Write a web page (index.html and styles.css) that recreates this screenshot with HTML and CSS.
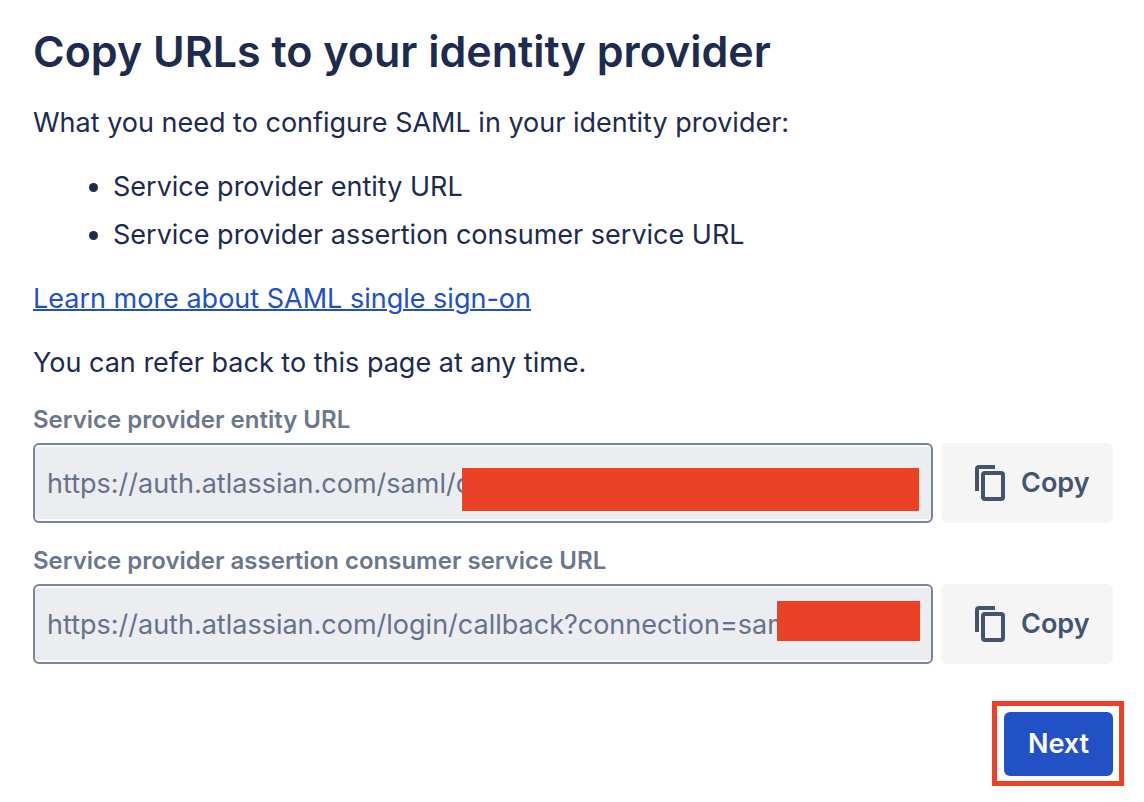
FILE: index.html
```html
<!DOCTYPE html>
<html lang="en">
<head>
<meta charset="utf-8">
<title>Copy URLs to your identity provider</title>
<link rel="stylesheet" href="styles.css">
</head>
<body>
<main class="page">
  <h1 class="title">Copy URLs to your identity provider</h1>
  <p class="text">What you need to configure SAML in your identity provider:</p>
  <ul class="list">
    <li>Service provider entity URL</li>
    <li>Service provider assertion consumer service URL</li>
  </ul>
  <p class="text"><a class="link" href="#saml">Learn more about SAML single sign-on</a></p>
  <p class="text">You can refer back to this page at any time.</p>
  <form class="form">
    <div class="field">
      <label class="label" for="entity">Service provider entity URL</label>
      <div class="row">
        <div class="box">
          <input class="input" id="entity" type="text" readonly value="https://auth.atlassian.com/saml/c">
          <span class="mask mask-entity"></span>
        </div>
        <button class="copy" type="button">
          <svg class="icon" viewBox="0 0 30 36" fill="none" stroke="currentColor" stroke-width="4" aria-hidden="true"><path d="M2 26V4q0-2 2-2H20"/><rect x="8" y="8" width="20" height="26" rx="2"/></svg>
          Copy
        </button>
      </div>
    </div>
    <div class="field">
      <label class="label" for="acs">Service provider assertion consumer service URL</label>
      <div class="row">
        <div class="box">
          <input class="input" id="acs" type="text" readonly value="https://auth.atlassian.com/login/callback?connection=sam">
          <span class="mask mask-acs"></span>
        </div>
        <button class="copy" type="button">
          <svg class="icon" viewBox="0 0 30 36" fill="none" stroke="currentColor" stroke-width="4" aria-hidden="true"><path d="M2 26V4q0-2 2-2H20"/><rect x="8" y="8" width="20" height="26" rx="2"/></svg>
          Copy
        </button>
      </div>
    </div>
    <div class="actions">
      <div class="highlight"><button class="next" type="button">Next</button></div>
    </div>
  </form>
</main>
</body>
</html>
```
FILE: styles.css
```css
* { box-sizing: border-box; }
body { margin: 0; background: #fff; color: #1c2b4f; font: 27px/48px Inter, sans-serif; }
.page { padding: 23px 31px 16px 33px; }
.title { margin: 0 0 20px; font-size: 43px; line-height: 56px; font-weight: 600; }
.text { margin: 0 0 16px; }
.list { margin: 0 0 16px; padding-left: 80px; }
.link { color: #2050c8; text-decoration: underline; text-decoration-thickness: 2px; }
.field { margin-bottom: 21px; }
.label { display: block; padding-bottom: 6px; font-size: 24px; line-height: 34px; font-weight: 600; color: #6b778c; }
.row { display: flex; gap: 8px; }
.box { position: relative; flex: 1; }
.input { display: block; width: 100%; height: 80px; padding: 0 12px; border: 2px solid #7a859c; border-radius: 6px; background: #ecedf1; box-shadow: inset 0 2px #fafbfc, inset 0 -2px #fafbfc; color: #66728a; font: inherit; outline: none; }
.mask { position: absolute; background: #eb4127; }
.mask-entity { top: 25px; right: 14px; width: 457px; height: 43px; }
.mask-acs { top: 17px; right: 13px; width: 143px; height: 40px; }
.copy { display: flex; align-items: center; gap: 16px; width: 172px; height: 80px; padding: 0 0 0 34px; border: 0; border-radius: 6px; background: #f5f5f5; color: #44546f; font: 600 27px/40px Inter, sans-serif; }
.icon { width: 30px; height: 36px; }
.actions { display: flex; justify-content: flex-end; margin: 37px -11px 0 0; }
.highlight { padding: 6px 6px 5px 7px; border: 5px solid #eb4127; }
.next { display: block; width: 109px; height: 64px; padding: 0; border: 0; border-radius: 6px; background: #2151c5; color: #fff; font: 600 27px/40px Inter, sans-serif; }
```
